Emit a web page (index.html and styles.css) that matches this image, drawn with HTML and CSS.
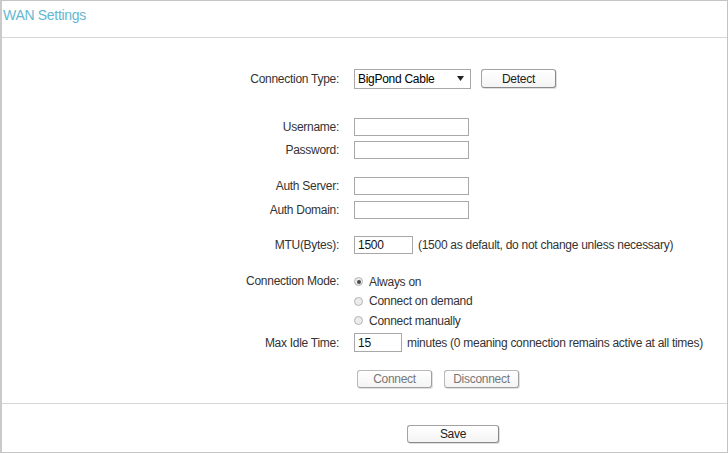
FILE: index.html
```html
<!DOCTYPE html>
<html>
<head>
<meta charset="utf-8">
<link rel="stylesheet" href="styles.css">
</head>
<body>
<div class="panel">
  <div class="header"><span class="title">WAN Settings</span></div>
  <div class="content">
    <div class="row r-type">
      <div class="label">Connection Type:</div>
      <div class="field">
        <div class="select"><span>BigPond Cable</span><svg class="arrow" width="7" height="5" viewBox="0 0 7 5"><path d="M0 0H7L3.5 5Z" fill="#222"/></svg></div>
        <button class="btn btn-detect">Detect</button>
      </div>
    </div>
    <div class="row r-user">
      <div class="label">Username:</div>
      <div class="field"><input class="text w-long" type="text"></div>
    </div>
    <div class="row r-pass">
      <div class="label">Password:</div>
      <div class="field"><input class="text w-long" type="password"></div>
    </div>
    <div class="row r-auth1">
      <div class="label">Auth Server:</div>
      <div class="field"><input class="text w-long" type="text"></div>
    </div>
    <div class="row r-auth2">
      <div class="label">Auth Domain:</div>
      <div class="field"><input class="text w-long" type="text"></div>
    </div>
    <div class="row r-mtu">
      <div class="label">MTU(Bytes):</div>
      <div class="field"><input class="text w-mtu" type="text" value="1500"><span class="hint">(1500 as default, do not change unless necessary)</span></div>
    </div>
    <div class="row r-mode">
      <div class="label">Connection Mode:</div>
      <div class="radios">
        <div class="radio-line"><span class="radio checked"></span><span>Always on</span></div>
        <div class="radio-line"><span class="radio"></span><span>Connect on demand</span></div>
        <div class="radio-line"><span class="radio"></span><span>Connect manually</span></div>
      </div>
    </div>
    <div class="row r-idle">
      <div class="label">Max Idle Time:</div>
      <div class="field"><input class="text w-idle" type="text" value="15"><span class="hint">minutes (0 meaning connection remains active at all times)</span></div>
    </div>
    <div class="row r-btns">
      <div class="label"></div>
      <div class="field btns">
        <button class="btn btn-disabled">Connect</button>
        <button class="btn btn-disabled">Disconnect</button>
      </div>
    </div>
  </div>
  <div class="footer">
    <button class="btn btn-save">Save</button>
  </div>
</div>
</body>
</html>
```
FILE: styles.css
```css
* { box-sizing: border-box; }
html, body { margin: 0; padding: 0; background: #fff; }
body { font-family: "Liberation Sans", Arial, sans-serif; font-size: 12px; letter-spacing: -0.28px; color: #333; }

.panel {
  width: 728px;
  height: 453px;
  border: 1px solid #c4c4c4;
  border-left: 2px solid #cacaca;
  display: flex;
  flex-direction: column;
}

.header {
  height: 37px;
  border-bottom: 1px solid #d6d6d6;
  padding: 6px 0 0 1px;
}
.title {
  font-size: 14px;
  line-height: 16px;
  letter-spacing: -0.3px;
  color: #63b8d1;
}

.content {
  padding-top: 29px;
  padding-bottom: 12px;
  border-bottom: 1px solid #d6d6d6;
}

.row {
  display: flex;
  align-items: center;
  height: 24px;
}
.label {
  width: 337px;
  text-align: right;
  color: #333;
  flex: none;
}
.field {
  margin-left: 15px;
  display: flex;
  align-items: center;
}
.r-type { height: 23px; }
.r-user { margin-top: 25px; height: 23px; }
.r-pass { height: 23px; }
.r-auth1 { margin-top: 13px; }
.r-mtu { margin-top: 11px; }
.r-mode { margin-top: 15px; height: auto; align-items: flex-start; }
.r-mode .label { line-height: 19.5px; }
.r-idle { height: 24px; }
.r-btns { margin-top: 12px; }

.radios { margin-left: 15px; display: flex; flex-direction: column; }
.radio-line { height: 19.5px; display: flex; align-items: center; color: #333; }
.radio {
  width: 9px; height: 9px;
  border: 1px solid #b3b3b3;
  border-radius: 50%;
  background: #ececec;
  margin-right: 6px;
  position: relative;
  flex: none;
}
.radio.checked::after {
  content: "";
  position: absolute;
  left: 1.5px; top: 1.5px;
  width: 4px; height: 4px;
  border-radius: 50%;
  background: #4a4a4a;
}

.text {
  height: 18px;
  border: 1px solid #a8a8a8;
  padding: 0 3px;
  margin: 0;
  font-family: "Liberation Sans", Arial, sans-serif;
  font-size: 12px;
  letter-spacing: -0.28px;
  color: #111;
  outline: none;
  background: #fff;
}
.w-long { width: 115px; }
.w-mtu { width: 59px; }
.w-idle { width: 48px; height: 19px; }
.hint { margin-left: 5px; color: #333; }

.select {
  width: 117px;
  height: 20px;
  border: 1px solid #a8a8a8;
  display: flex;
  align-items: center;
  justify-content: space-between;
  padding: 0 6px 0 3px;
  color: #000;
  background: #fff;
}
.arrow { display: block; }

.btn {
  font-family: "Liberation Sans", Arial, sans-serif;
  font-size: 12px;
  letter-spacing: -0.28px;
  height: 19px;
  padding: 0;
  border: 1px solid #a2a2a2;
  border-right-color: #8a8a8a;
  border-bottom-color: #8a8a8a;
  border-radius: 3px;
  background: linear-gradient(#ffffff, #f4f4f4);
  color: #222;
  box-shadow: 1px 1px 0 #e0e0e0;
}
.btn-detect { width: 75px; margin-left: 10px; }
.btns { margin-left: 18px; }
.btn-disabled {
  width: 75px;
  height: 18px;
  color: #777;
  border-color: #b9b9b9;
  border-right-color: #a0a0a0;
  border-bottom-color: #a0a0a0;
  margin-right: 12px;
}
.footer {
  flex: 1;
  padding: 21px 0 0 405px;
}
.btn-save { width: 92px; height: 18px; }
```
